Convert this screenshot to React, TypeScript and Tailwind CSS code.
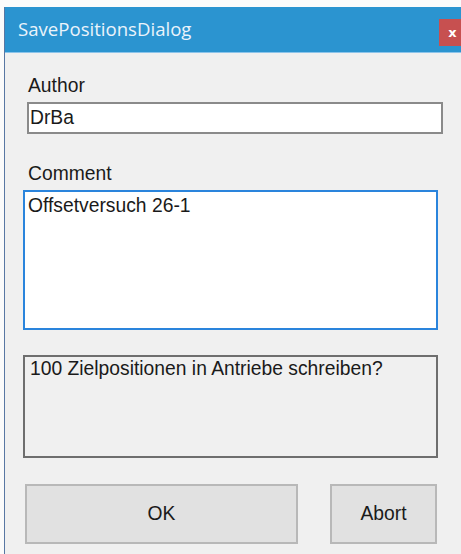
const label = "font-['Liberation_Sans',Arial,sans-serif] text-[19.3px] leading-[22px] text-[#1a1a1a]";

export default function App() {
  return (
    <div className="h-[554px] w-[461px] overflow-hidden bg-[#fbfbfb] pl-[4px] pt-[7px]">
      <div className="flex h-[560px] w-[462px] flex-col border-l border-[#5877a3] bg-[#f0f0f0]">
        {/* title bar */}
        <div className="flex h-[46px] items-start justify-between border-b border-[#8cc4ea] bg-[#2b94d0]">
          <span className="ml-[13px] mt-[9px] font-['Open_Sans',sans-serif] text-[18.6px] leading-[26px] text-[#eaf3fb]">
            SavePositionsDialog
          </span>
          <div className="mt-[12px] flex h-[27px] w-[27px] items-center justify-center bg-[#c75050] font-['DejaVu_Sans',sans-serif] text-[13px] font-bold leading-none text-white">
            x
          </div>
        </div>

        <div className="flex flex-col">
          <div className={`ml-[23px] mt-[22px] ${label}`}>Author</div>
          <div className={`ml-[22px] mt-[5px] flex h-[32px] w-[416px] items-center border-2 border-[#8a8a8a] bg-white pl-[1px] ${label}`}>
            DrBa
          </div>

          <div className={`ml-[23px] mt-[29px] ${label}`}>Comment</div>
          <div className={`ml-[18px] mt-[5px] h-[140px] w-[415px] border-2 border-[#2a84dc] bg-white pl-[3px] pt-[3px] ${label}`}>
            Offsetversuch 26-1
          </div>

          <div className={`ml-[18px] mt-[25px] h-[103px] w-[415px] border-2 border-[#6e6e6e] bg-[#f0f0f0] pl-[5px] pt-[1px] ${label}`}>
            100 Zielpositionen in Antriebe schreiben?
          </div>

          <div className="ml-[20px] mt-[26px] flex gap-[32px]">
            <button className={`h-[60px] w-[273px] border-2 border-[#b8b8b8] bg-[#e1e1e1] ${label}`}>OK</button>
            <button className={`h-[60px] w-[107px] border-2 border-[#b8b8b8] bg-[#e1e1e1] ${label}`}>Abort</button>
          </div>
        </div>
      </div>
    </div>
  );
}
